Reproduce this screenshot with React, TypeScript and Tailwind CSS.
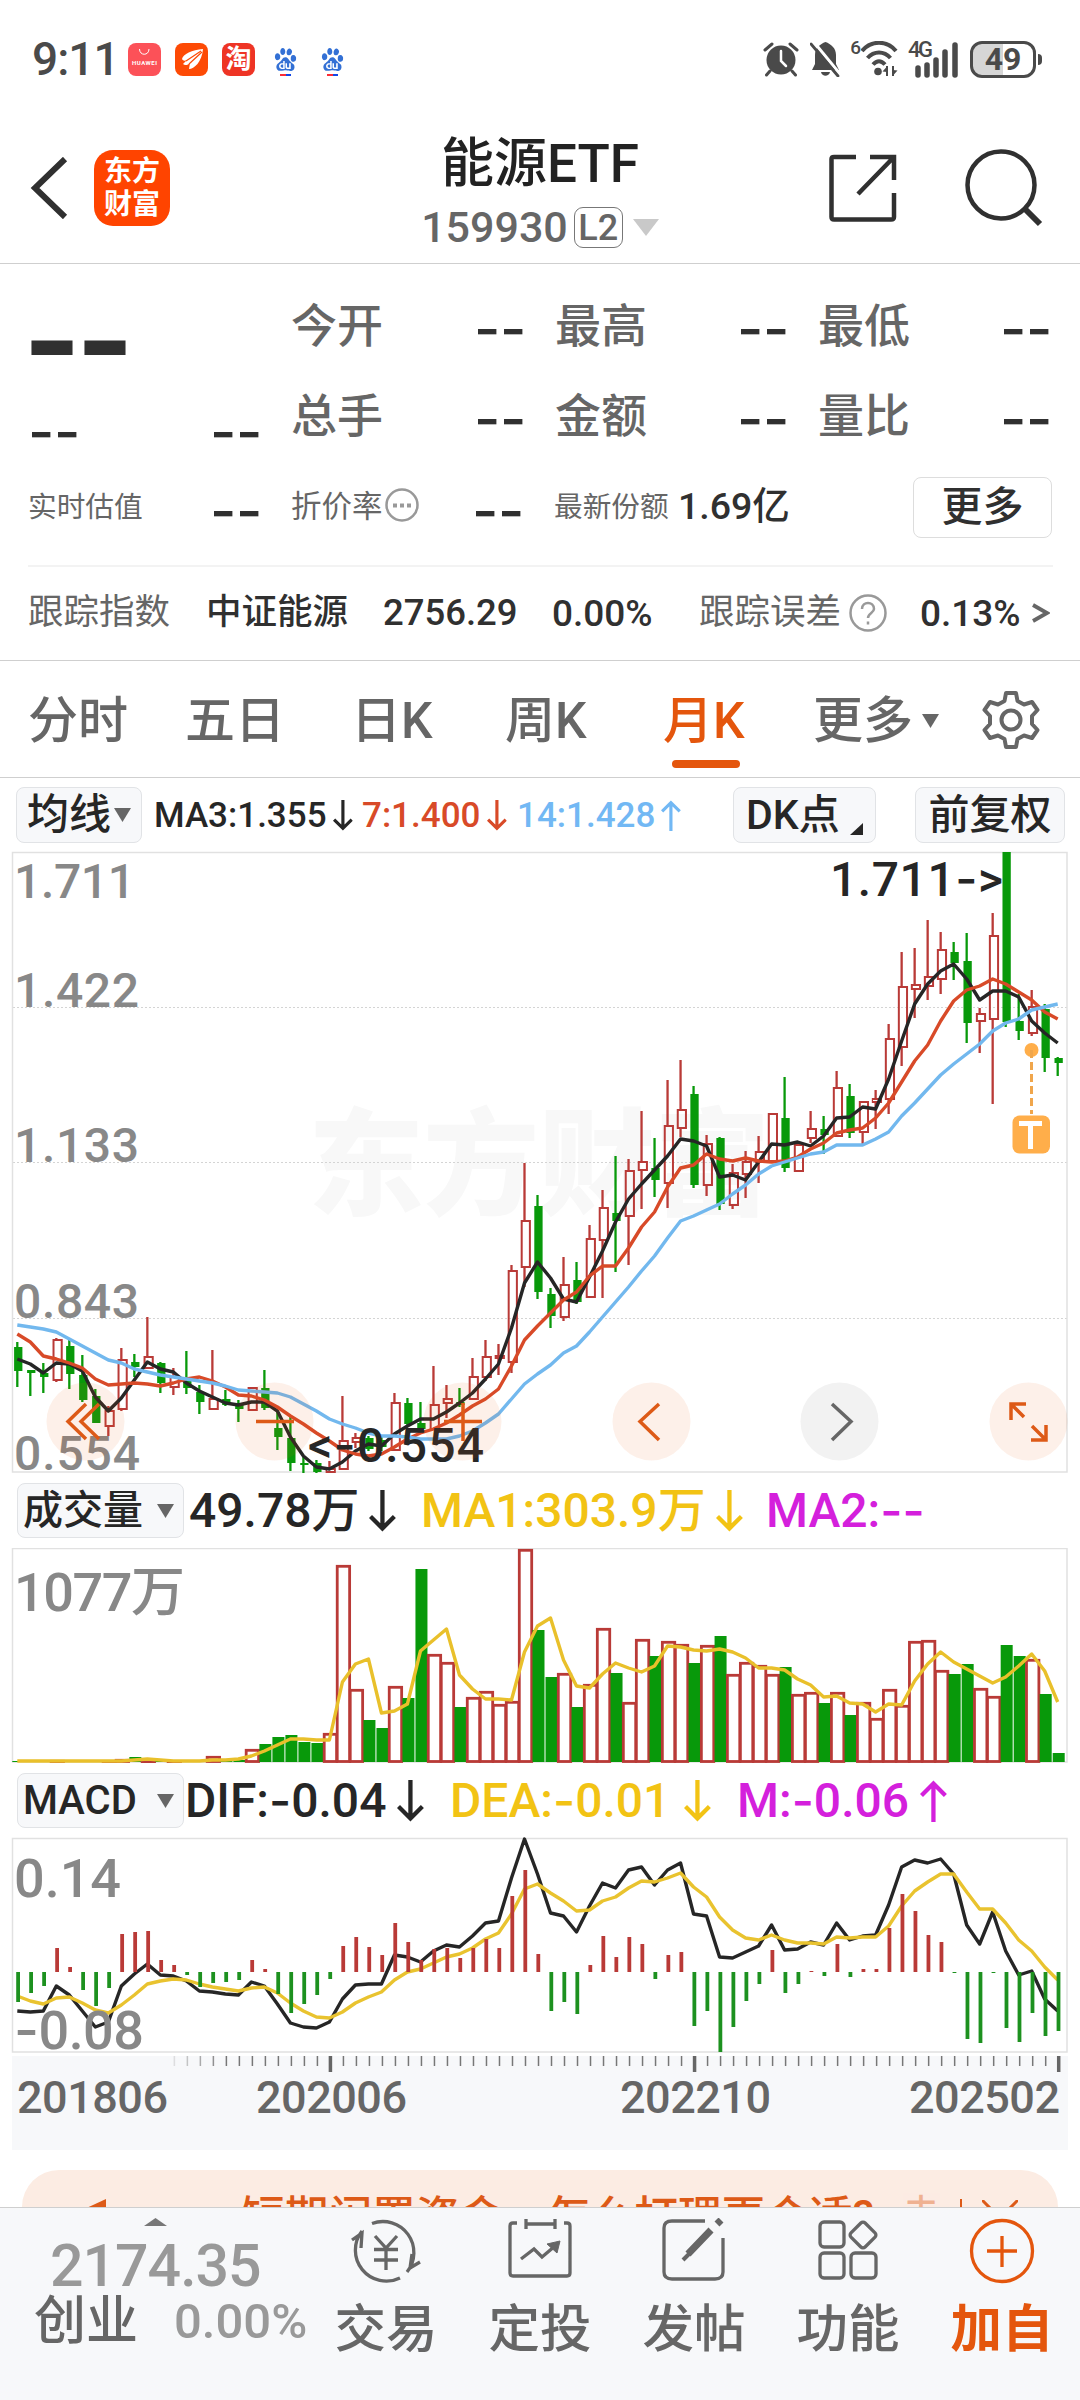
import { SiBaidu } from "react-icons/si";

type Candle = ["R" | "G", number, number, number, number];

// direction, high, body top, body bottom, low
const candles: Candle[] = [
  ["G", 1342, 1347, 1371, 1387], ["G", 1370, 1370, 1373, 1396], ["G", 1363, 1373, 1377, 1393],
  ["R", 1338, 1340, 1380, 1382], ["G", 1340, 1346, 1374, 1389], ["G", 1355, 1375, 1400, 1402],
  ["G", 1389, 1396, 1423, 1423], ["R", 1406, 1411, 1426, 1436], ["R", 1348, 1360, 1409, 1411],
  ["G", 1354, 1362, 1367, 1377], ["R", 1317, 1357, 1368, 1368], ["G", 1362, 1363, 1383, 1393],
  ["R", 1368, 1377, 1387, 1395], ["G", 1351, 1379, 1388, 1394], ["G", 1385, 1392, 1402, 1414],
  ["R", 1350, 1399, 1409, 1409], ["G", 1390, 1399, 1405, 1406], ["G", 1400, 1405, 1409, 1422],
  ["R", 1388, 1388, 1410, 1410], ["G", 1370, 1388, 1408, 1410], ["G", 1412, 1428, 1437, 1450],
  ["G", 1417, 1438, 1463, 1471], ["G", 1457, 1463, 1465, 1473], ["G", 1460, 1463, 1472, 1473],
  ["R", 1461, 1469, 1472, 1472], ["R", 1396, 1441, 1469, 1469], ["R", 1433, 1438, 1442, 1448],
  ["G", 1436, 1438, 1449, 1451], ["G", 1437, 1440, 1447, 1451], ["R", 1393, 1403, 1450, 1451],
  ["G", 1398, 1403, 1424, 1426], ["G", 1402, 1423, 1429, 1430], ["R", 1366, 1405, 1429, 1430],
  ["R", 1385, 1399, 1403, 1418], ["G", 1388, 1402, 1405, 1407], ["R", 1358, 1377, 1399, 1399],
  ["R", 1340, 1357, 1377, 1381], ["R", 1344, 1356, 1358, 1375], ["R", 1265, 1271, 1362, 1373],
  ["R", 1163, 1221, 1267, 1287], ["G", 1195, 1206, 1292, 1299], ["G", 1288, 1294, 1316, 1328],
  ["R", 1257, 1285, 1317, 1321], ["G", 1262, 1280, 1302, 1304], ["R", 1225, 1239, 1297, 1297],
  ["R", 1190, 1208, 1240, 1298], ["G", 1156, 1213, 1221, 1272], ["R", 1159, 1171, 1216, 1265],
  ["R", 1111, 1162, 1170, 1209], ["G", 1138, 1168, 1180, 1197], ["R", 1080, 1126, 1183, 1208],
  ["R", 1060, 1110, 1128, 1137], ["G", 1086, 1094, 1185, 1188], ["R", 1135, 1144, 1185, 1196],
  ["G", 1137, 1138, 1204, 1210], ["R", 1164, 1173, 1205, 1209], ["R", 1151, 1162, 1174, 1198],
  ["R", 1136, 1152, 1162, 1183], ["R", 1113, 1114, 1161, 1162], ["G", 1077, 1118, 1168, 1172],
  ["R", 1144, 1145, 1171, 1171], ["R", 1111, 1129, 1138, 1143], ["G", 1116, 1129, 1135, 1154],
  ["R", 1071, 1088, 1136, 1136], ["G", 1084, 1096, 1133, 1138], ["R", 1101, 1102, 1132, 1144],
  ["R", 1090, 1099, 1102, 1129], ["R", 1024, 1039, 1099, 1114], ["R", 952, 987, 1047, 1066],
  ["R", 948, 985, 989, 1018], ["R", 920, 977, 986, 1000], ["R", 932, 950, 979, 994],
  ["G", 942, 952, 963, 980], ["G", 933, 961, 1023, 1043], ["R", 1008, 1014, 1021, 1053],
  ["R", 913, 936, 1019, 1104], ["G", 852, 852, 1022, 1027], ["G", 994, 1021, 1031, 1040],
  ["R", 990, 1007, 1033, 1036], ["G", 1004, 1009, 1058, 1072], ["G", 1057, 1058, 1063, 1076],
];

const ma3 = [
  1359, 1364, 1373, 1363, 1364, 1371, 1397, 1411, 1398, 1380, 1362, 1369, 1372, 1383, 1391, 1397, 1403,
  1405, 1402, 1402, 1411, 1437, 1456, 1467, 1469, 1462, 1451, 1444, 1446, 1434, 1426, 1419, 1419, 1412,
  1403, 1393, 1379, 1364, 1328, 1283, 1262, 1278, 1299, 1302, 1277, 1251, 1222, 1199, 1184, 1170, 1156,
  1139, 1141, 1146, 1177, 1175, 1180, 1162, 1144, 1145, 1142, 1146, 1136, 1118, 1117, 1107, 1109, 1079,
  1041, 1004, 984, 971, 964, 979, 1000, 991, 991, 997, 1021, 1033, 1043,
];

const ma7 = [
  1334, 1342, 1356, 1359, 1363, 1368, 1379, 1385, 1384, 1383, 1384, 1386, 1383, 1379, 1377, 1381, 1387,
  1395, 1396, 1400, 1407, 1416, 1424, 1433, 1441, 1450, 1454, 1456, 1454, 1447, 1439, 1433, 1429, 1423,
  1415, 1406, 1399, 1389, 1366, 1340, 1326, 1313, 1300, 1292, 1276, 1266, 1266, 1248, 1227, 1212, 1187,
  1168, 1165, 1154, 1159, 1161, 1158, 1161, 1162, 1161, 1157, 1149, 1143, 1133, 1130, 1128, 1118, 1103,
  1082, 1061, 1045, 1021, 1001, 990, 986, 979, 984, 992, 1000, 1012, 1019,
];

const ma14 = [
  1325, 1327, 1329, 1332, 1339, 1346, 1353, 1360, 1363, 1369, 1372, 1375, 1377, 1379, 1381, 1383, 1386,
  1390, 1391, 1392, 1393, 1397, 1404, 1411, 1419, 1424, 1428, 1433, 1436, 1436, 1437, 1439, 1439, 1439,
  1436, 1431, 1423, 1414, 1399, 1384, 1374, 1365, 1353, 1346, 1332, 1317, 1302, 1287, 1271, 1256, 1238,
  1221, 1216, 1210, 1204, 1194, 1185, 1174, 1166, 1162, 1158, 1154, 1152, 1145, 1145, 1145, 1139, 1132,
  1116, 1103, 1089, 1075, 1064, 1054, 1044, 1031, 1023, 1019, 1010, 1007, 1004,
];

const volumes = [
  1761, 1761, 1761, 1760, 1761, 1761, 1761, 1761, 1759, 1757, 1760, 1761, 1761, 1761, 1761, 1756, 1761,
  1760, 1749, 1744, 1737, 1735, 1742, 1743, 1733, 1565, 1689, 1720, 1728, 1686, 1698, 1569, 1654, 1662,
  1707, 1697, 1691, 1704, 1701, 1549, 1630, 1677, 1673, 1707, 1684, 1628, 1673, 1702, 1639, 1656, 1641,
  1644, 1663, 1645, 1636, 1674, 1662, 1665, 1674, 1667, 1694, 1692, 1703, 1692, 1715, 1702, 1718, 1689,
  1705, 1641, 1640, 1670, 1674, 1664, 1688, 1696, 1645, 1656, 1659, 1694, 1753,
];

const volumeMa = [
  1761, 1761, 1761, 1761, 1761, 1761, 1761, 1761, 1761, 1760, 1759, 1760, 1761, 1761, 1761, 1760, 1760,
  1759, 1756, 1751, 1745, 1739, 1739, 1740, 1740, 1682, 1664, 1659, 1713, 1711, 1704, 1651, 1640, 1629,
  1675, 1689, 1699, 1699, 1700, 1652, 1626, 1618, 1660, 1686, 1688, 1674, 1663, 1668, 1672, 1666, 1646,
  1647, 1650, 1651, 1649, 1652, 1658, 1668, 1668, 1670, 1679, 1685, 1697, 1696, 1703, 1704, 1712, 1704,
  1705, 1681, 1664, 1652, 1662, 1669, 1676, 1683, 1677, 1666, 1654, 1671, 1702,
];

const macd = [
  2002, 1993, 1986, 1948, 1967, 1990, 2006, 1988, 1934, 1932, 1931, 1960, 1965, 1975, 1987, 1983, 1982,
  1980, 1960, 1969, 1994, 2013, 2004, 1995, 1979, 1946, 1937, 1947, 1955, 1923, 1942, 1960, 1949, 1948,
  1958, 1948, 1939, 1948, 1896, 1870, 1954, 2011, 2002, 2014, 1965, 1936, 1957, 1937, 1944, 1979, 1955,
  1952, 2026, 2011, 2052, 2027, 2001, 1984, 1950, 1993, 1984, 1971, 1976, 1944, 1977, 1969, 1969, 1928,
  1894, 1911, 1935, 1942, 1973, 2039, 2043, 1973, 2028, 2042, 2013, 2036, 2031,
];

const dif = [
  2011, 2012, 2011, 1986, 1995, 2011, 2027, 2022, 1986, 1974, 1964, 1975, 1976, 1981, 1991, 1992, 1994,
  1995, 1982, 1986, 2004, 2023, 2027, 2028, 2022, 1999, 1985, 1984, 1984, 1955, 1957, 1962, 1951, 1945,
  1947, 1936, 1923, 1921, 1878, 1839, 1874, 1913, 1916, 1932, 1906, 1883, 1888, 1870, 1867, 1885, 1870,
  1863, 1914, 1916, 1957, 1958, 1952, 1946, 1925, 1950, 1949, 1942, 1945, 1923, 1940, 1936, 1935, 1905,
  1867, 1860, 1863, 1859, 1874, 1925, 1944, 1912, 1951, 1975, 1971, 1999, 2011,
];

const dea = [
  1996, 2001, 2004, 1998, 1997, 2003, 2010, 2013, 2005, 1995, 1984, 1981, 1979, 1980, 1984, 1987, 1989,
  1991, 1988, 1987, 1993, 2003, 2011, 2017, 2018, 2012, 2003, 1997, 1992, 1980, 1972, 1969, 1963, 1957,
  1954, 1948, 1939, 1933, 1914, 1889, 1884, 1893, 1901, 1911, 1910, 1901, 1897, 1888, 1881, 1882, 1878,
  1873, 1887, 1897, 1917, 1930, 1938, 1940, 1935, 1940, 1943, 1943, 1944, 1937, 1938, 1937, 1937, 1926,
  1906, 1891, 1882, 1874, 1874, 1892, 1909, 1909, 1923, 1940, 1951, 1967, 1980,
];

const RED = "#b93a37";
const GREEN = "#08990a";
const ZERO = 1972;

const px = (i: number) => 17.3 + i * 13.005;
const toPoints = (ys: number[]) => ys.map((y, i) => `${px(i)},${y}`).join(" ");

const Line = ({ ys, color }: { ys: number[]; color: string }) => (
  <polyline
    points={toPoints(ys)}
    fill="none"
    stroke={color}
    strokeWidth="3.4"
    strokeLinejoin="round"
  />
);

interface LabelProps {
  x: number;
  y: number;
  size: number;
  width: number;
  color?: string;
  children: string;
}

// hyphens are set in Inter, where they are as wide as a minus sign
const Label = ({ x, y, size, width, color = "#888", children }: LabelProps) => (
  <text x={x} y={y} fontSize={size} fontWeight="500" fill={color} textLength={width}>
    {children.split(/(-)/).map((part, i) =>
      part === "-" ? (
        <tspan key={i} fontFamily="Inter">-</tspan>
      ) : (
        part
      )
    )}
  </text>
);

const PriceChart = () => (
  <svg className="block overflow-visible" width="1080" height="621" viewBox="0 852 1080 621">
    <text
      x="308"
      y="1206"
      fontSize="116"
      fontWeight="900"
      fill="#f8f8f8"
      textLength="462"
    >
      东方财富
    </text>
    <g stroke="#d4d4d4" strokeDasharray="2 2">
      <path d="M13 1007.5H1067M13 1162.5H1067M13 1318.5H1067" />
    </g>
    <rect x="12.5" y="852.5" width="1054.5" height="619.5" fill="none" stroke="#e1e1e1" strokeWidth="1.5" />
    <Label x={14} y={898} size={48} width={121}>1.711</Label>
    <Label x={14} y={1007} size={48} width={125}>1.422</Label>
    <Label x={14} y={1162} size={48} width={125}>1.133</Label>
    <Label x={14} y={1318} size={48} width={125}>0.843</Label>
    <Label x={14} y={1470} size={48} width={126}>0.554</Label>
    {candles.map(([dir, high, top, bottom, low], i) => (
      <g key={i}>
        {dir === "G" ? (
          <>
            <path d={`M${px(i)} ${high}V${low}`} stroke={GREEN} strokeWidth="2.3" />
            <rect x={px(i) - 3.2} y={top} width="8.3" height={bottom - top} fill={GREEN} />
          </>
        ) : (
          <>
            <path d={`M${px(i)} ${high}V${top}M${px(i)} ${bottom}V${low}`} stroke={RED} strokeWidth="2.3" />
            <rect
              x={px(i) - 2.8}
              y={top}
              width="8.2"
              height={bottom - top}
              fill="none"
              stroke={RED}
              strokeWidth="2"
            />
          </>
        )}
      </g>
    ))}
    <Line ys={ma3} color="#262626" />
    <Line ys={ma7} color="#d84a28" />
    <Line ys={ma14} color="#72b8ee" />
    <Label x={830} y={896} size={48} width={173} color="#262626">{"1.711->"}</Label>
    <Label x={308} y={1462} size={48} width={176} color="#262626">{"<-0.554"}</Label>
    <circle cx="1031.5" cy="1050" r="7" fill="#ffae4a" />
    <path d="M1031.5 1050V1114" stroke="#f0a64c" strokeWidth="3" strokeDasharray="8 4" />
    <rect x="1012.5" y="1115.5" width="37.5" height="38" rx="7" fill="#ffae4a" />
    <path d="M1019 1123.500H1042M1030.500 1123.500V1149" stroke="#fff" strokeWidth="5" />
  </svg>
);

const VolumeChart = () => (
  <svg className="block" width="1080" height="215" viewBox="0 1548 1080 215">
    <rect x="12.5" y="1548.5" width="1054.5" height="213.5" fill="none" stroke="#e1e1e1" strokeWidth="1.5" />
    {volumes.map((y, i) =>
      candles[i][0] === "G" ? (
        <rect key={i} x={px(i) - 5} y={y} width="12" height={1762 - y} fill={GREEN} />
      ) : (
        <rect
          key={i}
          x={px(i) - 5.2}
          y={y + 1.3}
          width="12.4"
          height={Math.max(1761 - y - 0.8, 0.5)}
          fill="#fff"
          stroke={RED}
          strokeWidth="2.8"
        />
      )
    )}
    <Line ys={volumeMa} color="#e9c02b" />
    <Label x={14} y={1611} size={54} width={171}>1077万</Label>
  </svg>
);

const MacdChart = () => (
  <svg className="block overflow-visible" width="1080" height="215" viewBox="0 1838 1080 215">
    <rect x="12.5" y="1838.5" width="1054.5" height="213.5" fill="none" stroke="#e1e1e1" strokeWidth="1.5" />
    <Line ys={dif} color="#262626" />
    <Line ys={dea} color="#e9c32f" />
    {macd.map((y, i) => (
      <path
        key={i}
        d={`M${px(i) + 0.8} ${ZERO}V${y}`}
        stroke={y > ZERO ? "#1d911f" : RED}
        strokeWidth="3.8"
      />
    ))}
    <Label x={14} y={1896.5} size={54} width={107}>0.14</Label>
    <Label x={14} y={2049} size={54} width={130}>-0.08</Label>
  </svg>
);

const TimeAxis = () => (
  <svg className="mt-[3px] block" width="1080" height="94" viewBox="0 2056 1080 94">
    <rect x="12" y="2056" width="1056" height="94" fill="#f7f8fa" />
    {candles.map((_, i) =>
      i % 28 === 24 ? (
        <path key={i} d={`M${px(i) + 1} 2056V2072`} stroke="#666" strokeWidth="3.500" />
      ) : (
        i > 11 && (
          <path
            key={i}
            d={`M${px(i) + 1} 2056V2066`}
            stroke="#777"
            strokeWidth="1.500"
            opacity={Math.min((i - 11) / 5, 1)}
          />
        )
      )
    )}
    <Label x={17} y={2113} size={45} width={151} color="#666">201806</Label>
    <Label x={256} y={2113} size={45} width={151} color="#666">202006</Label>
    <Label x={620} y={2113} size={45} width={151} color="#666">202210</Label>
    <Label x={909} y={2113} size={45} width={151} color="#666">202502</Label>
  </svg>
);

const Arrow = ({ up, size = 42 }: { up?: boolean; size?: number }) => (
  <svg
    className={up ? "shrink-0" : "shrink-0 rotate-180"}
    width={size * 0.64}
    height={size}
    viewBox="0 0 27 42"
    fill="none"
    stroke="currentColor"
    strokeWidth="4.300"
  >
    <path d="M13.500 42V3M1.500 15.500L13.500 3.500L25.500 15.500" />
  </svg>
);

const Caret = () => (
  <svg className="shrink-0" width="17" height="14" viewBox="0 0 17 14" fill="#666">
    <path d="M0 0H17L8.500 14Z" />
  </svg>
);

const Minus = () => <span className="font-[Inter]">-</span>;

const Dashes = () => (
  <span className="font-[Inter] text-[57px] font-medium leading-none tracking-[-0.4px] text-[#303030]">
    --
  </span>
);

const StatusBar = () => (
  <div className="flex h-[116px] items-center pl-8 pt-[2px] text-[#4a4a4a]">
    <span className="w-[96px] text-[46px] font-medium leading-none tracking-[-1px]">9:11</span>
    <div className="flex items-center gap-[14px]">
      <svg width="33" height="33" viewBox="0 0 33 33">
        <rect width="33" height="33" rx="8" fill="#fc5158" />
        <path d="M11.500 6C11.500 13 21 13 21 6" fill="none" stroke="#fff" strokeWidth="1" />
        <text x="4" y="22" fontSize="6" fontWeight="700" fill="#fff" textLength="25">HUAWEI</text>
      </svg>
      <svg width="33" height="33" viewBox="0 0 33 33">
        <rect width="33" height="33" rx="8" fill="#fd4a05" />
        <path d="M28 6C17 7 8 11 7 16C8 18 10 18 12 17L8 21C10 23 13 22 15 20L14 26C19 26 27 19 28 6Z" fill="#fff" />
        <path d="M26 8L11 18M27 9L14 21" stroke="#fd4a05" strokeWidth="1.200" />
      </svg>
      <div className="flex size-[33px] items-center justify-center rounded-lg bg-[#ee3425] text-[26px] font-bold leading-none text-white">
        淘
      </div>
      {[0, 1].map((i) => (
        <div key={i} className="flex h-[33px] w-[33px] flex-col items-center justify-end">
          <SiBaidu className="text-[#3370d5]" size={23} />
          <div className="mt-[3px] flex">
            <span className="h-[2px] w-[6px] bg-red-500" />
            <span className="h-[2px] w-[5px] bg-blue-700" />
          </div>
        </div>
      ))}
    </div>
    <svg className="ml-auto" width="36" height="36" viewBox="0 0 36 36">
      <circle cx="18" cy="19" r="14.500" fill="#4a4a4a" />
      <path d="M2 9L9 3M34 9L27 3M7 30L3.500 34M29 30L32.500 34" stroke="#4a4a4a" strokeWidth="3" strokeLinecap="round" />
      <path d="M18 10V20L23 25" fill="none" stroke="#fff" strokeWidth="2.500" strokeLinecap="round" />
    </svg>
    <svg className="ml-[11px]" width="31" height="36" viewBox="0 0 31 36">
      <path d="M15.500 1C21 3 26 7 26 14V23L29 29H2L5 23V14C5 7 10 3 15.500 1ZM11 31H20C19 36 12 36 11 31Z" fill="#4a4a4a" />
      <path d="M3 0L31 34" stroke="#fff" strokeWidth="3" />
      <path d="M1 3L28 35" stroke="#4a4a4a" strokeWidth="2.800" strokeLinecap="round" />
    </svg>
    <div className="mb-[24px] ml-[9px] text-[19px] font-medium leading-none">6</div>
    <svg width="39" height="36" viewBox="0 0 39 36" fill="none" stroke="#4a4a4a" strokeWidth="4">
      <path d="M1 10C10 -1 26 -1 35 10M6.500 17C13 9.500 23 9.500 29.500 17M12 23.500C16 19 20 19 24 23.500" />
      <circle cx="17" cy="30.500" r="3.800" fill="#4a4a4a" stroke="none" />
      <path d="M26 25V35M32 25V35" strokeWidth="2" />
      <path d="M21.500 30.500L26 25.500V31ZM36.500 29.500L32 34.500V29Z" fill="#4a4a4a" stroke="none" />
    </svg>
    <svg className="ml-[8px] overflow-visible" width="51" height="36" viewBox="0 0 51 36">
      <text x="0" y="15.500" fontSize="22" fontWeight="500" fill="#4a4a4a" textLength="25">4G</text>
      <path
        d="M10 34V27M19 34V24M28 34V19M37 34V11M47 34V4"
        stroke="#4a4a4a"
        strokeWidth="5.500"
        strokeLinecap="round"
      />
    </svg>
    <div className="ml-[11px] flex h-[37px] w-[66px] items-center justify-center rounded-[12px] border-[3px] border-[#4a4a4a] bg-linear-to-r from-[#d6d6d6] from-50% to-white to-50% text-[32px] font-bold leading-none">
      49
    </div>
    <div className="ml-[2px] mr-[38px] h-[11px] w-1 rounded-r-full bg-[#4a4a4a]" />
  </div>
);

const Header = () => (
  <div className="flex h-[148px] items-center border-b border-[#cfcfcf] pb-[4px]">
    <svg className="ml-[30px]" width="38" height="62" viewBox="0 0 38 62" fill="none" stroke="#303030" strokeWidth="6">
      <path d="M35 2L5 31L35 60" />
    </svg>
    <div className="ml-[26px] grid h-[76px] w-[76px] content-center justify-center rounded-[19px] bg-[#ff4400] text-center text-[28px] font-bold leading-[33px] text-white">
      <span>东方</span>
      <span>财富</span>
    </div>
    <div className="flex w-[659px] flex-col items-center pl-[81px] pt-[14px]">
      <h1 className="text-[53px] font-medium leading-[66px] text-[#222]">能源ETF</h1>
      <div className="flex h-[62px] items-center text-[#666]">
        <span className="text-[43px] font-medium leading-none">159930</span>
        <span className="ml-[6px] flex h-[41px] w-[49px] items-center justify-center rounded-[9px] border-[1.5px] border-[#777] text-[36px] font-medium leading-none">
          L2
        </span>
        <svg className="ml-[10px]" width="26" height="17" viewBox="0 0 26 17" fill="#c9c9c9">
          <path d="M0 0H26L13 17Z" />
        </svg>
      </div>
    </div>
    <svg width="68" height="68" viewBox="0 0 68 68" fill="none" stroke="#303030" strokeWidth="4.500">
      <path d="M27 3H5Q2.500 3 2.500 5V63Q2.500 65.500 5 65.500H62Q65 65.500 65 63V39" />
      <path d="M41 3H65V26M64 4L29 40" />
    </svg>
    <svg className="ml-[68px]" width="78" height="78" viewBox="0 0 78 78" fill="none" stroke="#303030" strokeWidth="4.500">
      <circle cx="36" cy="36" r="33.500" />
      <path d="M59 59L75 75" strokeWidth="6" />
    </svg>
  </div>
);

const Quote = ({ name }: { name: string }) => (
  <div className="flex h-[90px] items-center justify-between pr-[30px]">
    <span className="-ml-px text-[46px] font-medium leading-none text-[#666]">{name}</span>
    <span className="flex pt-[4px]">
      <Dashes />
    </span>
  </div>
);

const QuotePanel = () => (
  <div className="h-[397px] border-b border-[#cfcfcf] pl-[28px]">
    <div className="grid grid-cols-[264px_264px_263px_263px] pt-[17px]">
      <div className="-ml-[5px] flex h-[90px] items-center pt-[28px] font-[Inter] text-[124px] font-bold leading-none tracking-[-5px] text-[#303030]">
        --
      </div>
      <Quote name="今开" />
      <Quote name="最高" />
      <Quote name="最低" />
      <div className="flex h-[90px] items-center justify-between pr-[30px] pt-[30px]">
        <Dashes />
        <Dashes />
      </div>
      <Quote name="总手" />
      <Quote name="金额" />
      <Quote name="量比" />
    </div>
    <div className="flex h-[92px] items-center text-[#666]">
      <div className="flex w-[263px] items-center justify-between pr-[29px]">
        <span className="text-[28.700px] leading-none">实时估值</span>
        <span className="flex pt-[6px]"><Dashes /></span>
      </div>
      <div className="flex w-[263px] items-center justify-between pr-[30px]">
        <span className="flex items-center gap-[2px] text-[30.500px] leading-none">
          折价率
          <svg className="mb-1" width="34" height="34" viewBox="0 0 34 34" fill="none" stroke="#999" strokeWidth="2.500">
            <circle cx="17" cy="17" r="15.500" />
            <path d="M8 17.500H12M15 17.500H19M22 17.500H26" strokeWidth="4" />
          </svg>
        </span>
        <span className="flex pt-[6px]"><Dashes /></span>
      </div>
      <span className="w-[124px] text-[28.700px] leading-none">最新份额</span>
      <span className="text-[37.500px] font-medium leading-none text-[#303030]">1.69亿</span>
      <button className="ml-auto mr-[28px] h-[61px] w-[139px] rounded-lg border-[1.5px] border-[#ddd] text-[41px] font-medium leading-none text-[#303030]">
        更多
      </button>
    </div>
    <div className="mr-[27px] mt-[12px] h-[2px] bg-[#f3f3f3]" />
    <div className="flex h-[92px] items-center text-[37px] font-medium leading-none text-[#303030]">
      <span className="w-[178px] text-[35.500px] font-normal text-[#666]">跟踪指数</span>
      <span className="w-[177px] text-[35.500px]">中证能源</span>
      <span className="w-[169px] text-[36.500px]">2756.29</span>
      <span className="w-[147px]">0.00%</span>
      <span className="w-[150px] text-[35.500px] font-normal text-[#666]">跟踪误差</span>
      <svg width="38" height="38" viewBox="0 0 38 38" fill="none" stroke="#999" strokeWidth="2.500">
        <circle cx="19" cy="19" r="17.500" />
        <path d="M13 15C13 7 25 7 25 15C25 19 19 19 19 24M19 27.500V30.500" />
      </svg>
      <span className="ml-[33px] w-[112px]">0.13%</span>
      <svg width="18" height="20" viewBox="0 0 18 20" fill="none" stroke="#666" strokeWidth="3.800">
        <path d="M1 2L15 10L1 18" />
      </svg>
    </div>
  </div>
);

const Tabs = () => (
  <div className="flex h-[117px] items-center border-b border-[#cfcfcf] pl-[28px] pt-[3px] text-[50px] font-medium leading-none text-[#666]">
    <span className="w-[157px]">分时</span>
    <span className="w-[166px]">五日</span>
    <span className="w-[154px]">日K</span>
    <span className="w-[158px]">周K</span>
    <div className="relative w-[150px] text-[#e4560d]">
      月K
      <span className="absolute -bottom-[22px] left-[9px] h-2 w-[68px] rounded-full bg-[#e4560d]" />
    </div>
    <span className="w-[109px]">更多</span>
    <Caret />
    <svg className="-mt-[2px] ml-[42px]" width="60" height="60" viewBox="0 0 60 60" fill="none" stroke="#666" strokeWidth="4">
      <path
        d="M25 3H35L36.500 11L43 14.500L51 12L56.500 20L51 26V34L56.500 40L51 48L43 45.500L36.500 49L35 57H25L23.500 49L17 45.500L9 48L3.500 40L9 34V26L3.500 20L9 12L17 14.500L23.500 11Z"
        strokeLinejoin="round"
      />
      <circle cx="30" cy="30" r="9.500" />
    </svg>
  </div>
);

const MaToolbar = () => (
  <div className="flex h-[74px] items-center pl-4 text-[35px] font-medium leading-none text-[#262626]">
    <button className="flex h-[56px] w-[126px] items-center gap-[3px] rounded-lg border-[1.5px] border-[#e1e3e6] bg-[#f7f8fa] pl-[10px] text-[42px] leading-none">
      均线
      <Caret />
    </button>
    <span className="ml-[12px] flex w-[208px] items-center justify-between pr-[9px]">
      MA3:1.355
      <Arrow size={31} />
    </span>
    <span className="flex w-[155px] items-center justify-between pr-[10px] text-[#d84a28]">
      7:1.400
      <Arrow size={31} />
    </span>
    <span className="flex w-[164px] items-center justify-between text-[#72b8f4]">
      14:1.428
      <Arrow up size={31} />
    </span>
    <button className="ml-[52px] flex h-[56px] w-[143px] items-center rounded-lg border-[1.5px] border-[#e1e3e6] bg-[#f7f8fa] pl-[12px] text-[41px] leading-none">
      DK点
      <svg className="ml-[10px] mt-[28px]" width="13" height="12" viewBox="0 0 13 12">
        <path d="M13 0V12H0Z" fill="#262626" />
      </svg>
    </button>
    <button className="ml-[39px] h-[56px] w-[150px] rounded-lg border-[1.5px] border-[#e1e3e6] bg-[#f7f8fa] text-[41px] leading-none">
      前复权
    </button>
  </div>
);

const zoomIcons = [
  "M40 22L22 39.500L40 57M53 22L35 39.500L53 57",
  "M21 39.500H59",
  "M21 39.500H59M40 21V59",
  "M47 22L28 39.500L47 58",
  "M32 22L51 39.500L32 58",
  "M22 38V22H37M22 22L35 35M57 43V58H42M57 58L43 44",
];

const ChartControls = () => (
  <div className="absolute bottom-[12px] left-[46px] flex w-[1022px] justify-between">
    {zoomIcons.map((d, i) => (
      <svg
        key={i}
        width="79"
        height="79"
        viewBox="0 0 79 79"
        fill="none"
        stroke={i === 4 ? "#666" : "#dd5a17"}
        strokeWidth="3.500"
      >
        <circle cx="39.5" cy="39.5" r="39" fill={i === 4 ? "#f2f2f2" : "#e4560d"} fillOpacity={i === 4 ? 1 : 0.09} stroke="none" />
        <path d={d} />
      </svg>
    ))}
  </div>
);

const IndicatorButton = ({ name }: { name: string }) => (
  <button className="flex h-[55px] w-[167px] shrink-0 items-center justify-between rounded-lg border-[1.5px] border-[#e1e3e6] bg-[#f7f8fa] pl-[5px] pr-[9px] text-[40px] leading-none">
    {name}
    <Caret />
  </button>
);

interface NavItemProps {
  name: string;
  active?: boolean;
  children: React.ReactNode;
}

const NavItem = ({ name, active, children }: NavItemProps) => (
  <div className={`flex w-[154px] flex-col items-center pt-[10px] ${active ? "font-bold text-[#e4560d]" : "font-medium"}`}>
    <svg width="74" height="67" viewBox="0 0 74 67" fill="none" stroke="currentColor" strokeWidth="3.300">
      {children}
    </svg>
    <span className="mt-[19px] text-[51.500px] leading-none">{name}</span>
  </div>
);

const BottomNav = () => (
  <div className="flex h-[193px] border-t border-[#cfcfcf] bg-[#f7f8fa] text-[#666]">
    <div className="flex w-[309px] flex-col pt-[10px]">
      <svg className="ml-[144px]" width="23" height="8" viewBox="0 0 23 8" fill="#777">
        <path d="M0 8L11.500 0L23 8Z" />
      </svg>
      <span className="ml-[50px] mt-[10px] text-[59px] font-medium leading-[60px] tracking-[-1px] text-[#999]">
        2174.35
      </span>
      <div className="-mt-[2px] flex h-[56px] items-center leading-none">
        <span className="ml-[34px] w-[140px] text-[52px] font-medium">创业</span>
        <span className="mb-[2px] text-[49px] font-medium text-[#999]">0.00%</span>
      </div>
    </div>
    <NavItem name="交易">
      <path d="M23 5.500A31 31 0 0 1 58 54M51 60A31 31 0 0 1 13 13M3 22L13 15L12 30M71 44L61 50L63 36" />
      <path d="M26 18L37 30L48 18M37 30V52M25 31.500H49M25 42H49" />
    </NavItem>
    <NavItem name="定投">
      <path d="M14 5H10Q7 5 7 8V55Q7 58 10 58H64Q67 58 67 55V8Q67 5 64 5H61M23 1V11M52 1V11M23 6H52M18 41L31 31L39 39L52 28" />
      <path d="M44 26L57 23L54 35Z" fill="#666" strokeWidth="1" />
    </NavItem>
    <NavItem name="发帖">
      <path d="M48 3H15Q7 3 7 10V54Q7 61 15 61H58Q66 61 66 54V20" />
      <path d="M31 36L54 12M60 6L64 2" strokeWidth="7" />
      <path d="M26 42L33 35" strokeWidth="4" />
    </NavItem>
    <NavItem name="功能">
      <rect x="9" y="4" width="24" height="25" rx="4" />
      <rect x="9" y="35" width="24" height="25" rx="4" />
      <rect x="40" y="35" width="25" height="25" rx="4" />
      <rect x="42" y="7" width="20" height="20" rx="3" transform="rotate(45 52 17)" />
    </NavItem>
    <NavItem name="加自" active>
      <circle cx="37" cy="33" r="30.500" />
      <path d="M22 33H52M37 18V49" />
    </NavItem>
  </div>
);

const App = () => {
  return (
    <div className="flex h-[2400px] w-[1080px] flex-col overflow-hidden bg-white font-[Roboto,'Noto_Sans_CJK_SC',sans-serif]">
      <StatusBar />
      <Header />
      <QuotePanel />
      <Tabs />
      <MaToolbar />
      <div className="relative">
        <PriceChart />
        <ChartControls />
      </div>
      <div className="flex h-[75px] items-center pl-[17px] text-[48px] font-medium leading-none text-[#262626]">
        <IndicatorButton name="成交量" />
        <span className="ml-[5px] flex w-[232px] items-center gap-[10px]">
          49.78万
          <Arrow />
        </span>
        <span className="flex w-[345px] items-center gap-[10px] text-[#f2c314]">
          MA1:303.9万
          <Arrow />
        </span>
        <span className="flex items-center text-[#d420dc]">
          MA2:
          <Minus />
          <Minus />
        </span>
      </div>
      <VolumeChart />
      <div className="flex h-[75px] items-center pl-[17px] text-[48px] font-medium leading-none text-[#262626]">
        <IndicatorButton name="MACD" />
        <span className="ml-[1px] flex w-[265px] items-center">
          DIF:
          <Minus />
          <span className="mr-[11px]">0.04</span>
          <Arrow />
        </span>
        <span className="flex w-[287px] items-center text-[#f2c314]">
          DEA:
          <Minus />
          <span className="mr-[14px]">0.01</span>
          <Arrow />
        </span>
        <span className="flex items-center text-[#d420dc]">
          M:
          <Minus />
          <span className="mr-[11px]">0.06</span>
          <Arrow up />
        </span>
      </div>
      <MacdChart />
      <TimeAxis />
      <div className="mx-[22px] mt-[20px] flex h-[37px] items-start overflow-hidden rounded-t-[50px] bg-[#fcece3] pt-[26px] text-[43.700px] font-medium leading-none text-[#dd5a17]">
        <svg className="ml-[58px] mt-[3px] shrink-0" width="26" height="40" viewBox="0 0 26 40" fill="currentColor">
          <path d="M26 0V40L0 20V12Z" />
        </svg>
        <span className="ml-[135px] w-[662px] shrink-0 whitespace-nowrap">短期闲置资金，怎么打理更合适?</span>
        <span className="w-[57px] shrink-0 text-[36px] opacity-40">去</span>
        <span className="mt-[3px] h-8 w-[2px] shrink-0 bg-current" />
        <svg className="ml-[20px] mt-[4px] shrink-0" width="36" height="36" viewBox="0 0 36 36" stroke="currentColor" strokeWidth="3">
          <path d="M0 0L36 36M36 0L0 36" />
        </svg>
      </div>
      <BottomNav />
    </div>
  );
};

export default App;
